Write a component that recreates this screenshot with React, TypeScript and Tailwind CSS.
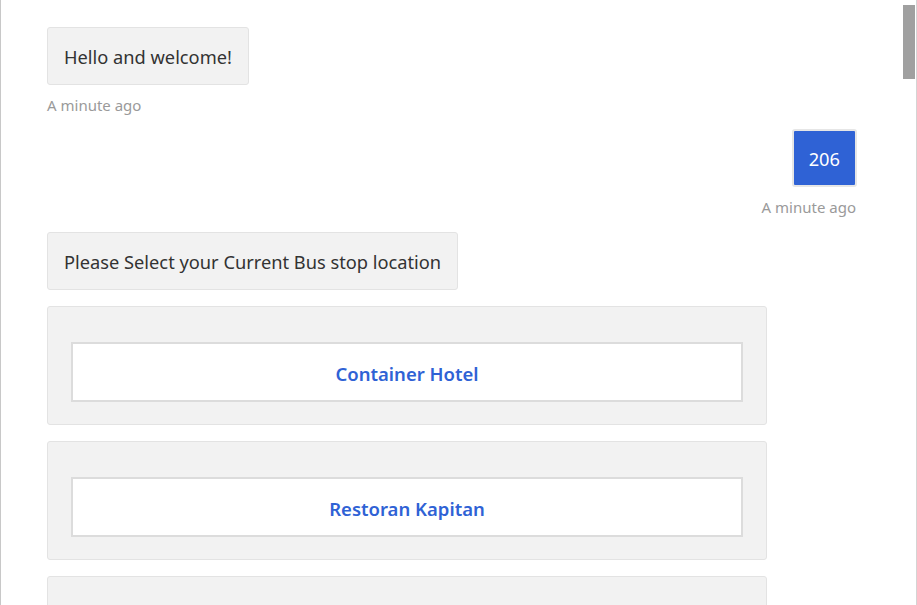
import React from 'react';

const stops = ['Container Hotel', 'Restoran Kapitan', 'Masjid Kapitan Keling'];

function BotBubble({ text }: { text: string }) {
  return (
    <div className="self-start rounded-[3px] border border-[#e3e3e3] bg-[#f2f2f2] px-4 pb-[15px] pt-[17px] text-[18.25px] leading-6 text-[#333]">
      {text}
    </div>
  );
}

function Stamp({ right }: { right?: boolean }) {
  return (
    <div className={`text-[15px] leading-5 text-[#9a9a9a] ${right ? 'mt-[10px] self-end pr-[1px]' : 'mt-[10px] self-start'}`}>
      A minute ago
    </div>
  );
}

function StopCard({ name }: { name: string }) {
  return (
    <div className="w-[720px] rounded-[3px] border border-[#e3e3e3] bg-[#f2f2f2] px-[23px] pb-[22px] pt-[35px]">
      <button className="flex h-[60px] w-full items-center justify-center border-2 border-[#dcdcdc] bg-white pt-[3px] text-[18.5px] font-semibold text-[#2f62d5]">
        {name}
      </button>
    </div>
  );
}

export default function App() {
  return (
    <div
      className="flex h-[605px] w-[917px] overflow-hidden border-l border-[#c8c8c8] bg-white"
      style={{ fontFamily: '"Noto Sans", "Open Sans", sans-serif' }}
    >
      <div className="flex flex-1 flex-col px-[46px] pt-[27px]">
        <BotBubble text="Hello and welcome!" />
        <Stamp />

        <div className="mt-[14px] self-end rounded-[3px] border-2 border-[#e6e6e6] bg-[#2f62d5] px-[15px] pb-[14px] pt-[16px] text-[18.25px] leading-6 text-white">
          206
        </div>
        <Stamp right />

        <div className="mt-[15px] flex flex-col gap-4">
          <BotBubble text="Please Select your Current Bus stop location" />
          {stops.map((s) => (
            <StopCard key={s} name={s} />
          ))}
        </div>
      </div>

      {/* scrollbar */}
      <div className="flex w-[14px] border-r border-[#d4d4d4] pt-[5px]">
        <div className="h-[74px] w-[12px] bg-[#a0a0a0]" />
      </div>
    </div>
  );
}
